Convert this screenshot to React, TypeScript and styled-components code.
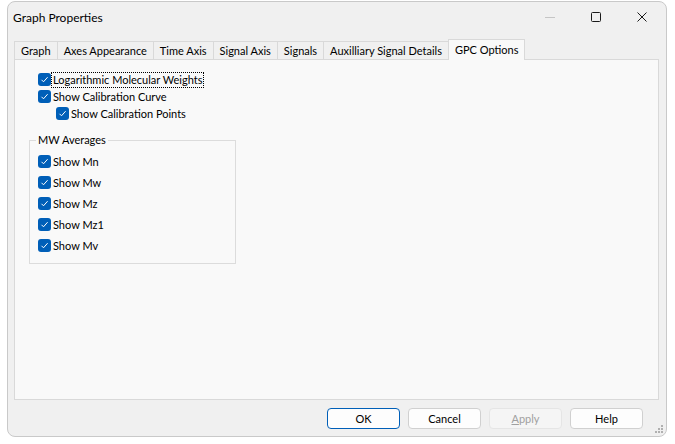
import { createGlobalStyle } from "styled-components";
import styled from "styled-components";

const GlobalStyle = createGlobalStyle`
  html, body {
    margin: 0;
    padding: 0;
    background: #ffffff;
  }
  body {
    font-family: Lato, "Noto Sans", sans-serif;
    font-size: 11px;
    color: #000;
  }
`;

const Window = styled.div`
  position: relative;
  box-sizing: border-box;
  margin: 1px 0 0 7px;
  width: 660px;
  height: 436px;
  border: 1px solid #c9c9c9;
  border-radius: 8px;
  background: #f0f0f0;
  overflow: hidden;
`;

const TitleBar = styled.div`
  display: flex;
  align-items: center;
  height: 30px;
  padding-left: 5px;
`;

const Title = styled.div`
  flex: 1;
  font-size: 12px;
`;

const Controls = styled.div`
  display: flex;
  height: 30px;
  margin-right: 1px;
`;

const ControlButton = styled.div<{ $dim?: boolean }>`
  width: 46px;
  height: 30px;
  display: flex;
  align-items: center;
  justify-content: center;
  color: ${(p) => (p.$dim ? "#c5c5c5" : "#1a1a1a")};
`;

const Body = styled.div`
  padding: 7px 7px 0 6px;
`;

const TabStrip = styled.div`
  display: flex;
  align-items: flex-end;
  height: 21px;
  position: relative;
  z-index: 1;
`;

const Tab = styled.div<{ $active?: boolean }>`
  box-sizing: border-box;
  height: ${(p) => (p.$active ? "21px" : "19px")};
  padding: ${(p) => (p.$active ? "0 6px 2px" : "0 6px")};
  display: flex;
  align-items: center;
  border: 1px solid #d9d9d9;
  border-bottom: ${(p) => (p.$active ? "none" : "1px solid #d9d9d9")};
  margin-left: -1px;
  background: ${(p) => (p.$active ? "#f9f9f9" : "#f0f0f0")};
  white-space: nowrap;
  &:first-child {
    margin-left: 0;
  }
`;

const Panel = styled.div`
  box-sizing: border-box;
  height: 341px;
  margin-top: -1px;
  border: 1px solid #d9d9d9;
  background: #f9f9f9;
  padding: 11px 0 0 23px;
`;

const CheckRow = styled.div<{ $indent?: number; $h?: number }>`
  display: flex;
  align-items: center;
  height: ${(p) => p.$h ?? 17}px;
  padding-left: ${(p) => p.$indent ?? 0}px;
`;

const Box = styled.span`
  width: 13px;
  height: 13px;
  border-radius: 3px;
  background: #005fb8;
  display: flex;
  align-items: center;
  justify-content: center;
  flex: none;
`;

const Label = styled.span<{ $focus?: boolean }>`
  margin-left: 1px;
  padding: 0 1px;
  line-height: 14px;
  outline: ${(p) => (p.$focus ? "1px dotted #000" : "none")};
  white-space: nowrap;
`;

const GroupBox = styled.div`
  position: relative;
  box-sizing: border-box;
  width: 207px;
  margin: 18px 0 0 -9px;
  border: 1px solid #dcdcdc;
  padding: 10px 0 7px 8px;
`;

const Legend = styled.span`
  position: absolute;
  top: -9px;
  left: 6px;
  padding: 0 2px;
  background: #f9f9f9;
  line-height: 16px;
`;

const ButtonRow = styled.div`
  display: flex;
  justify-content: flex-end;
  gap: 8px;
  margin-top: 8px;
  padding-right: 16px;
`;

const Button = styled.div<{ $primary?: boolean; $disabled?: boolean }>`
  box-sizing: border-box;
  width: 73px;
  height: 21px;
  border-radius: 4px;
  display: flex;
  align-items: center;
  justify-content: center;
  border: 1px solid
    ${(p) => (p.$primary ? "#005fb8" : p.$disabled ? "#e5e5e5" : "#d0d0d0")};
  background: ${(p) => (p.$disabled ? "#f5f5f5" : "#fdfdfd")};
  color: ${(p) => (p.$disabled ? "#a0a0a0" : "#000")};
  & u {
    text-decoration: underline;
  }
`;

const Grip = styled.svg`
  position: absolute;
  right: 3px;
  bottom: 3px;
`;

function Check() {
  return (
    <Box>
      <svg width="9" height="9" viewBox="0 0 9 9">
        <path d="M1.5 4.8 L3.5 6.8 L7.6 2.2" fill="none" stroke="#fff" strokeWidth="1" />
      </svg>
    </Box>
  );
}

const tabs = [
  "Graph",
  "Axes Appearance",
  "Time Axis",
  "Signal Axis",
  "Signals",
  "Auxilliary Signal Details",
  "GPC Options",
];

const averages = ["Show Mn", "Show Mw", "Show Mz", "Show Mz1", "Show Mv"];

export default function App() {
  return (
    <>
      <GlobalStyle />
      <Window>
        <TitleBar>
          <Title>Graph Properties</Title>
          <Controls>
            <ControlButton $dim>
              <svg width="10" height="10" viewBox="0 0 10 10">
                <path d="M0 5.5 H10" stroke="currentColor" strokeWidth="1" />
              </svg>
            </ControlButton>
            <ControlButton>
              <svg width="10" height="10" viewBox="0 0 10 10">
                <rect x="0.5" y="0.5" width="9" height="9" rx="1" fill="none" stroke="currentColor" strokeWidth="1" />
              </svg>
            </ControlButton>
            <ControlButton>
              <svg width="10" height="10" viewBox="0 0 10 10">
                <path d="M0.5 0.5 L9.5 9.5 M9.5 0.5 L0.5 9.5" stroke="currentColor" strokeWidth="1" />
              </svg>
            </ControlButton>
          </Controls>
        </TitleBar>
        <Body>
          <TabStrip>
            {tabs.map((t) => (
              <Tab key={t} $active={t === "GPC Options"}>
                {t}
              </Tab>
            ))}
          </TabStrip>
          <Panel>
            <CheckRow>
              <Check />
              <Label $focus>Logarithmic Molecular Weights</Label>
            </CheckRow>
            <CheckRow>
              <Check />
              <Label>Show Calibration Curve</Label>
            </CheckRow>
            <CheckRow $indent={18}>
              <Check />
              <Label>Show Calibration Points</Label>
            </CheckRow>
            <GroupBox>
              <Legend>MW Averages</Legend>
              {averages.map((a) => (
                <CheckRow key={a} $h={21}>
                  <Check />
                  <Label>{a}</Label>
                </CheckRow>
              ))}
            </GroupBox>
          </Panel>
          <ButtonRow>
            <Button $primary>OK</Button>
            <Button>Cancel</Button>
            <Button $disabled>
              <span>
                <u>A</u>pply
              </span>
            </Button>
            <Button>Help</Button>
          </ButtonRow>
        </Body>
        <Grip width="8" height="8" viewBox="0 0 8 8">
          {[
            [6, 0],
            [6, 3],
            [3, 3],
            [6, 6],
            [3, 6],
            [0, 6],
          ].map(([x, y]) => (
            <rect key={`${x}-${y}`} x={x} y={y} width="2" height="2" fill="#b0b0b0" />
          ))}
        </Grip>
      </Window>
    </>
  );
}
